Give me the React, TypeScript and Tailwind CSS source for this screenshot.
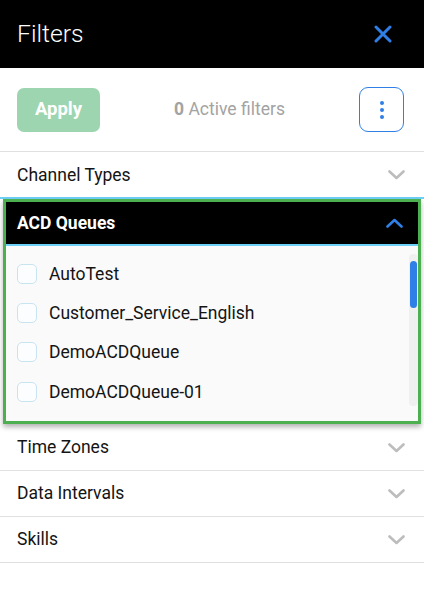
import React from "react";

const queues = [
  "AutoTest",
  "Customer_Service_English",
  "DemoACDQueue",
  "DemoACDQueue-01",
];

function ChevronDown({ color }: { color: string }) {
  return (
    <svg width="17" height="10" viewBox="0 0 17 10" fill="none">
      <polyline
        points="1.5,1.5 8.5,8 15.5,1.5"
        stroke={color}
        strokeWidth="2.6"
        strokeLinecap="round"
        strokeLinejoin="round"
      />
    </svg>
  );
}

function ChevronUp({ color }: { color: string }) {
  return (
    <svg width="17" height="10" viewBox="0 0 17 10" fill="none">
      <polyline
        points="1.5,8.5 8.5,2 15.5,8.5"
        stroke={color}
        strokeWidth="2.6"
        strokeLinecap="round"
        strokeLinejoin="round"
      />
    </svg>
  );
}

function SectionRow({ label }: { label: string }) {
  return (
    <div className="flex h-[46px] items-center justify-between border-b border-[#e0e0e0] pl-[17px] pr-[19px]">
      <span className="text-[17.5px] text-[#141414]">{label}</span>
      <ChevronDown color="#bdbdbd" />
    </div>
  );
}

export default function App() {
  return (
    <div
      className="h-[597px] w-[424px] overflow-hidden bg-white"
      style={{ fontFamily: "Roboto, 'Liberation Sans', sans-serif" }}
    >
      {/* Title bar */}
      <div className="flex h-[68px] items-center justify-between bg-black pl-[17px] pr-[32px]">
        <span className="text-[24.7px] font-light text-white">Filters</span>
        <svg width="18" height="18" viewBox="0 0 18 18" fill="none">
          <path
            d="M2 2 L16 16 M16 2 L2 16"
            stroke="#2f7fe6"
            strokeWidth="3"
            strokeLinecap="round"
          />
        </svg>
      </div>

      {/* Toolbar */}
      <div className="flex h-[84px] items-center border-b border-[#e0e0e0] pl-[17px] pr-[20px]">
        <button className="h-[44px] w-[83px] rounded-[7px] bg-[#9dd5b1] text-[18.5px] font-bold text-white">
          Apply
        </button>
        <div className="flex-1 text-center text-[17.5px] text-[#a3a3a3]">
          <span className="font-bold">0</span> Active filters
        </div>
        <button className="flex h-[45px] w-[45px] flex-col items-center justify-center gap-[3px] rounded-[9px] border border-[#2f7fe6]">
          <span className="h-[4px] w-[4px] rounded-full bg-[#2f7fe6]" />
          <span className="h-[4px] w-[4px] rounded-full bg-[#2f7fe6]" />
          <span className="h-[4px] w-[4px] rounded-full bg-[#2f7fe6]" />
        </button>
      </div>

      <div className="flex h-[45px] items-center justify-between pl-[17px] pr-[19px] pt-[1px]">
        <span className="text-[17.5px] text-[#141414]">Channel Types</span>
        <ChevronDown color="#bdbdbd" />
      </div>

      {/* Expanded section */}
      <div className="border-t-2 border-[#6dd0f7] pb-[1px]">
        <div className="mx-[3px] border-[3px] border-[#4caf50] shadow-[0_3px_5px_rgba(0,0,0,0.3)]">
          <div className="flex h-[42px] items-center justify-between bg-black pl-[11px] pr-[15px]">
            <span className="text-[17.5px] font-bold text-white">ACD Queues</span>
            <ChevronUp color="#2f7fe6" />
          </div>
          <div className="relative h-[177px] overflow-hidden border-t-2 border-[#6dd0f7] bg-[#fafafa]">
            <div className="pt-[8px]">
              {queues.map((q) => (
                <div key={q} className="flex h-[39.4px] items-center pl-[11px]">
                  <span className="h-[20px] w-[20px] rounded-[5px] border border-[#c8e4f1] bg-[#fbfdfe]" />
                  <span className="ml-[12px] text-[17.5px] text-[#141414]">{q}</span>
                </div>
              ))}
            </div>
            {/* scrollbar */}
            <div className="absolute right-0 top-[8px] h-[152px] w-[9px] rounded-[4px] bg-[#f0f0f0]">
              <div className="mx-auto mt-[7px] h-[47px] w-[7px] rounded-full bg-[#2f7fe6]" />
            </div>
          </div>
        </div>
      </div>

      <SectionRow label="Time Zones" />
      <SectionRow label="Data Intervals" />
      <SectionRow label="Skills" />
    </div>
  );
}
